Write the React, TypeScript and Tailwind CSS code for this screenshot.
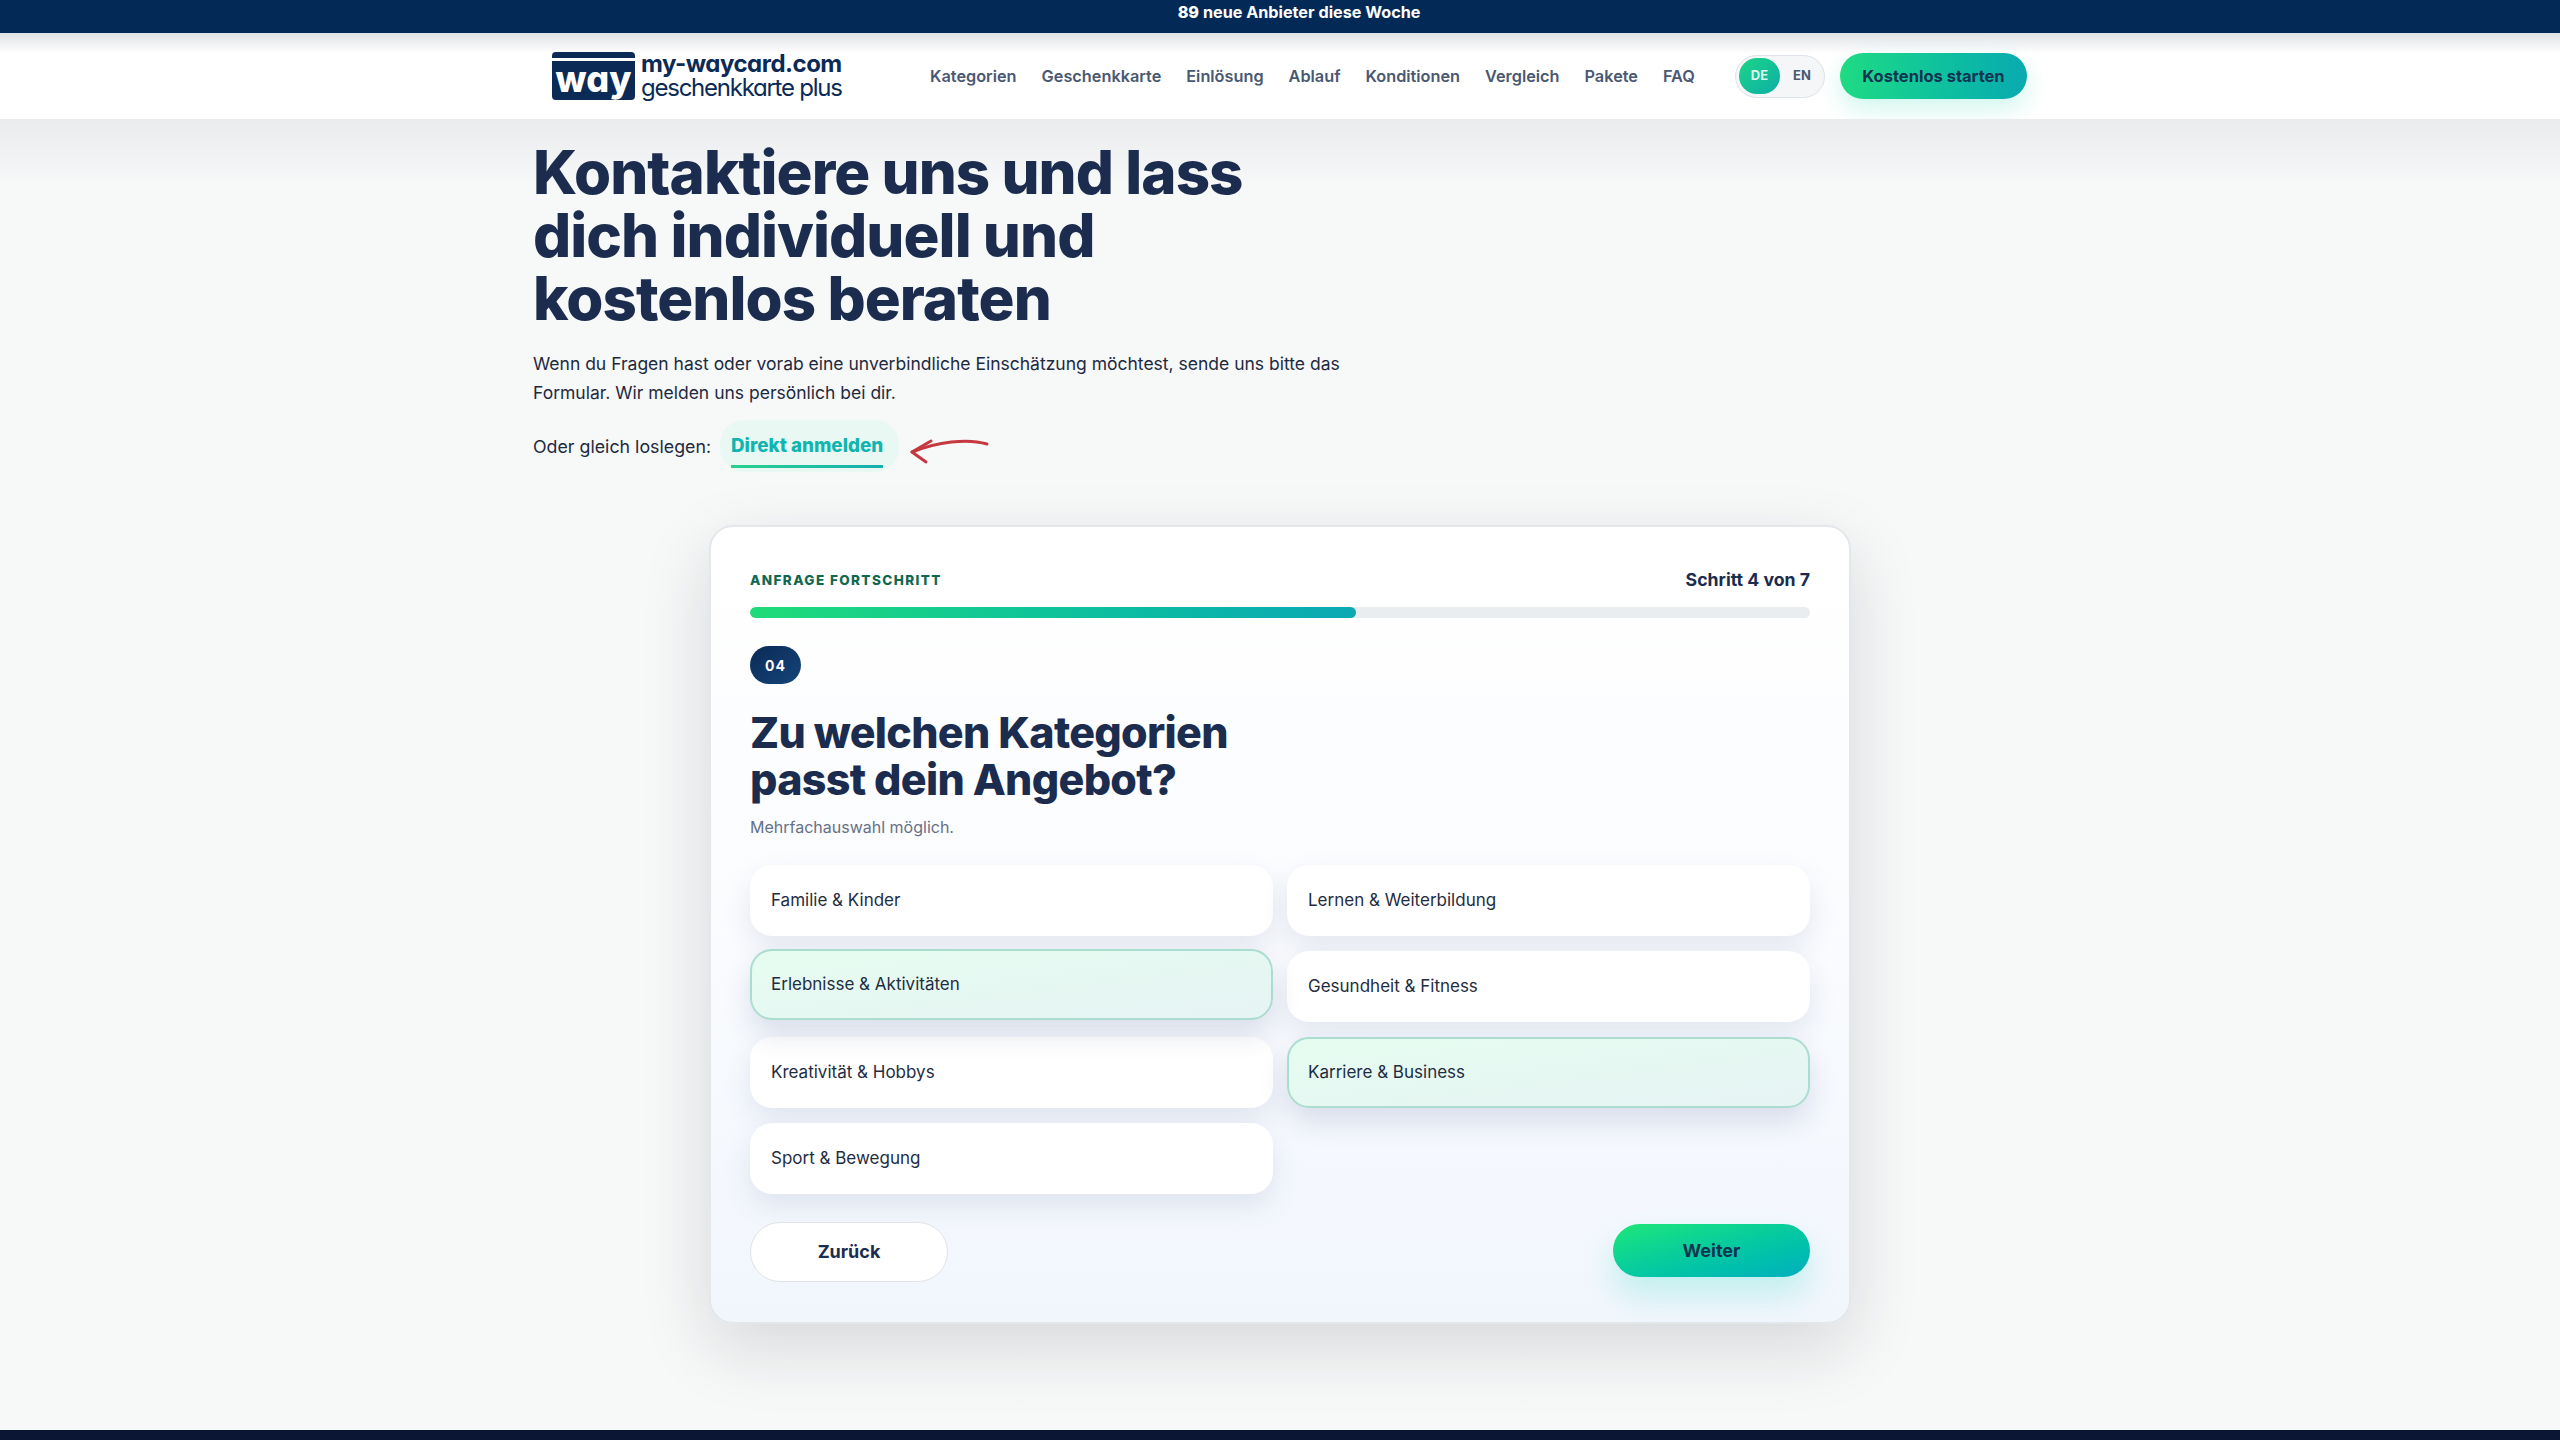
const navItems = ["Kategorien", "Geschenkkarte", "Einlösung", "Ablauf", "Konditionen", "Vergleich", "Pakete", "FAQ"];

const categories = [
  { label: "Familie & Kinder" },
  { label: "Lernen & Weiterbildung" },
  { label: "Erlebnisse & Aktivitäten", selected: true, lifted: true },
  { label: "Gesundheit & Fitness" },
  { label: "Kreativität & Hobbys" },
  { label: "Karriere & Business", selected: true },
  { label: "Sport & Bewegung" },
];

function Logo() {
  return (
    <div className="flex items-center gap-[6px] [font-feature-settings:'cv11']">
      <div className="flex h-[48px] w-[83px] flex-col gap-[3px]">
        <div className="h-[8px] rounded-t-[4px] bg-[#0b2a56]" />
        <div className="flex flex-1 items-center justify-center rounded-b-[4px] bg-[#0b2a56] pb-[3px] text-[36px] leading-none font-extrabold text-white">
          way
        </div>
      </div>
      <div className="flex w-[202px] flex-col whitespace-nowrap text-[#0b2a56]">
        <span className="text-[24px] leading-[24.5px] font-bold tracking-[-0.5px]">my-waycard.com</span>
        <span className="text-[24px] leading-[24.5px] font-normal tracking-[-1.25px]">geschenkkarte plus</span>
      </div>
    </div>
  );
}

function Header() {
  return (
    <header className="flex h-[86px] shrink-0 items-center justify-center bg-gradient-to-b from-[#dfe2e6] via-white via-[24%] to-white">
      <div className="flex w-[1494px] items-center pl-[19px]">
        <Logo />
        <nav className="ml-[87px] flex items-center gap-[25px] text-[16.3px] font-semibold text-[#4a5872]">
          {navItems.map((item) => (
            <span key={item}>{item}</span>
          ))}
        </nav>
        <div className="ml-auto flex items-center gap-[15px]">
          <div className="flex h-[43px] w-[90px] items-center rounded-full border border-[#dde3e8] bg-[#f4f6f8] pl-[3px] text-[13px] font-bold">
            <span className="flex h-[36px] w-[41px] items-center justify-center rounded-full bg-gradient-to-br from-[#1dd585] to-[#10aea5] text-[#d8f8ec]">
              DE
            </span>
            <span className="ml-[13px] text-[#4a5872]">EN</span>
          </div>
          <button className="h-[46px] w-[187px] rounded-full bg-gradient-to-r from-[#1fdb82] to-[#0aaab0] text-[16.5px] font-bold text-[#0f3350] shadow-[0_10px_24px_rgba(20,210,170,0.2)]">
            Kostenlos starten
          </button>
        </div>
      </div>
    </header>
  );
}

function Hero() {
  return (
    <section className="mx-auto w-[1494px] pt-[22px]">
      <h1 className="w-[800px] text-[60px] leading-[63px] font-extrabold tracking-[-0.95px] text-[#1b2c4e]">
        Kontaktiere uns und lass dich individuell und kostenlos beraten
      </h1>
      <p className="mt-[20px] w-[830px] text-[17.5px] leading-[28.5px] text-[#1d2a3f]">
        Wenn du Fragen hast oder vorab eine unverbindliche Einschätzung möchtest, sende uns bitte das Formular. Wir melden uns persönlich bei dir.
      </p>
      <div className="mt-[13px] flex items-center text-[17.8px] text-[#1d2a3f]">
        <span className="mt-[2px]">Oder gleich loslegen:</span>
        <span className="ml-[9px] flex h-[52px] flex-col rounded-[24px] bg-[#e9f8f3] pt-[13px] pr-[16px] pl-[11px]">
          <span className="text-[18.8px] leading-[26px] font-extrabold text-[#10b5b0]">Direkt anmelden</span>
          <span className="mt-[6px] h-[3px] bg-gradient-to-r from-[#28d28c] to-[#16aeb0]" />
        </span>
        <svg className="ml-[8px] mt-[9px]" width="82" height="30" viewBox="0 0 82 30" fill="none" stroke="#c5383f" strokeWidth="3" strokeLinecap="round" strokeLinejoin="round">
          <path d="M80 8C60 2 30 6 5 16" />
          <path d="M24 5L5 16L19 26" />
        </svg>
      </div>
    </section>
  );
}

function CategoryOption({ label, selected, lifted }: { label: string; selected?: boolean; lifted?: boolean }) {
  return (
    <button
      className={
        selected
          ? lifted
            ? "-translate-y-[2px] rounded-[22px] border-2 border-[#aadcd0] bg-gradient-to-br from-[#e6fcf0] to-[#e6f4f4] pl-[19px] text-left text-[17px] text-[#1f2d42] shadow-[0_14px_28px_rgba(40,60,120,0.14)]"
            : "rounded-[22px] border-2 border-[#aadcd0] bg-gradient-to-br from-[#e6fcf0] to-[#e6f4f4] pl-[19px] text-left text-[17px] text-[#1f2d42] shadow-[0_14px_28px_rgba(40,60,120,0.14)]"
          : "rounded-[22px] bg-white pl-[21px] text-left text-[17px] text-[#1f2d42] shadow-[0_12px_28px_rgba(40,60,120,0.1)]"
      }
    >
      {label}
    </button>
  );
}

function RequestCard() {
  return (
    <section className="mx-auto mt-[53px] h-[799px] w-[1142px] rounded-[24px] border-2 border-[#e3e7ea] bg-gradient-to-b from-white via-[#fbfcfe] via-[45%] to-[#f1f6fd] pt-[43px] pr-[39px] pl-[39px] shadow-[0_24px_70px_rgba(15,25,45,0.14)]">
      <div className="flex items-center justify-between">
        <span className="text-[13.5px] leading-[20px] font-extrabold tracking-[1.4px] text-[#12684f]">ANFRAGE FORTSCHRITT</span>
        <span className="text-[17.7px] leading-[20px] font-bold text-[#1b2c4e]">Schritt 4 von 7</span>
      </div>
      <div className="mt-[17px] h-[11px] overflow-hidden rounded-full bg-[#e9edf0]">
        <div className="h-full rounded-full bg-gradient-to-r from-[#20db78] to-[#0ca8b4]" style={{ width: `${(4 / 7) * 100}%` }} />
      </div>
      <div className="mt-[28px] flex h-[38px] w-[51px] items-center justify-center rounded-full bg-gradient-to-br from-[#0b2a56] to-[#14457a] text-[14px] font-bold tracking-[1px] text-white">
        04
      </div>
      <h2 className="mt-[25px] w-[520px] text-[43px] leading-[46.5px] font-extrabold tracking-[-0.7px] text-[#1b2c4e]">
        Zu welchen Kategorien passt dein Angebot?
      </h2>
      <p className="mt-[13px] text-[16px] leading-[24px] text-[#667085]">Mehrfachauswahl möglich.</p>
      <div className="mt-[26px] grid grid-cols-2 auto-rows-[71px] gap-x-[14px] gap-y-[15px]">
        {categories.map((category) => (
          <CategoryOption key={category.label} {...category} />
        ))}
      </div>
      <div className="mt-[28px] flex items-start justify-between">
        <button className="h-[60px] w-[198px] rounded-full border border-[#dfe3e8] bg-white pb-[2px] text-[18px] font-bold text-[#1b2c4e]">Zurück</button>
        <button className="mt-[2px] h-[53px] w-[197px] rounded-full bg-gradient-to-br from-[#1ee676] to-[#04aebd] text-[18px] font-bold text-[#0e3350] shadow-[0_18px_32px_rgba(20,210,180,0.22)]">
          Weiter
        </button>
      </div>
    </section>
  );
}

export default function App() {
  return (
    <div className="flex h-[1440px] flex-col overflow-hidden bg-[#f7f8f8] font-['Inter',sans-serif]">
      <div className="flex h-[33px] shrink-0 items-start justify-center bg-[#032a57] pl-[38px] text-[16.2px] leading-[24px] font-bold text-white">
        <span><span className="font-extrabold">89</span> neue Anbieter diese Woche</span>
      </div>
      <Header />
      <main className="min-h-0 flex-1 bg-gradient-to-b from-[#e9ebed] via-[#f7f8f8] via-[5%] to-[#f7f8f8]">
        <Hero />
        <RequestCard />
      </main>
      <div className="h-[10px] shrink-0 bg-[#0a1633]" />
    </div>
  );
}
